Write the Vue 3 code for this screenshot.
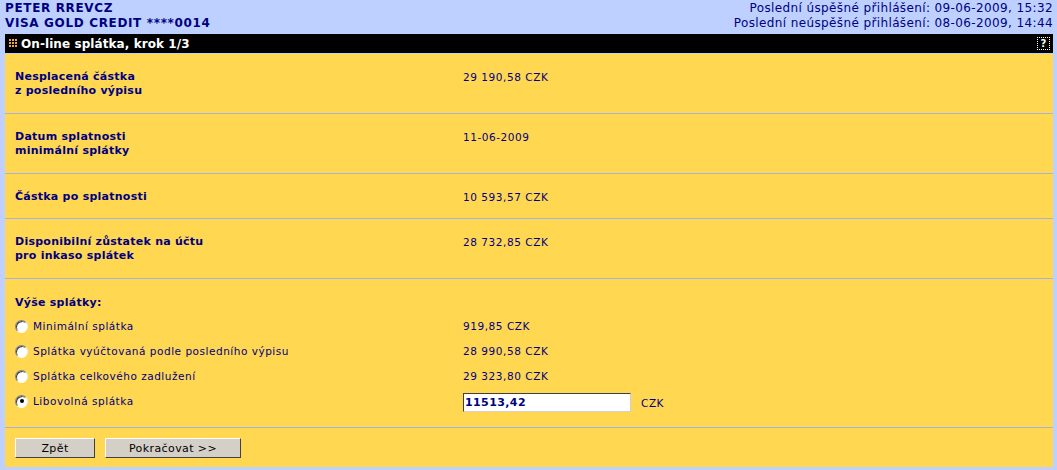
<script setup>
const infoRows = [
  { label: ["Nesplacená částka", "z posledního výpisu"], value: "29 190,58 CZK" },
  { label: ["Datum splatnosti", "minimální splátky"], value: "11-06-2009" },
  { label: ["Částka po splatnosti"], value: "10 593,57 CZK" },
  { label: ["Disponibilní zůstatek na účtu", "pro inkaso splátek"], value: "28 732,85 CZK" }
]

const options = [
  { label: "Minimální splátka", value: "919,85 CZK" },
  { label: "Splátka vyúčtovaná podle posledního výpisu", value: "28 990,58 CZK" },
  { label: "Splátka celkového zadlužení", value: "29 323,80 CZK" }
]
</script>

<template>
  <div class="page">
    <div class="top">
      <div class="client">
        <div>PETER RREVCZ</div>
        <div>VISA GOLD CREDIT ****0014</div>
      </div>
      <div class="logins">
        <div>Poslední úspěšné přihlášení: 09-06-2009, 15:32</div>
        <div>Poslední neúspěšné přihlášení: 08-06-2009, 14:44</div>
      </div>
    </div>

    <div class="titlebar">
      <svg class="dots" width="9" height="9" viewBox="0 0 9 9">
        <g fill="#f0a830">
          <rect x="0" y="0" width="2" height="2" /><rect x="3" y="0" width="2" height="2" /><rect x="6" y="0" width="2" height="2" />
          <rect x="0" y="3" width="2" height="2" /><rect x="3" y="3" width="2" height="2" /><rect x="6" y="3" width="2" height="2" />
          <rect x="0" y="6" width="2" height="2" /><rect x="3" y="6" width="2" height="2" /><rect x="6" y="6" width="2" height="2" />
        </g>
      </svg>
      <span class="title">On-line splátka, krok 1/3</span>
      <span class="help">?</span>
    </div>

    <div class="panel">
      <div
        v-for="row in infoRows"
        :key="row.value"
        class="row"
        :class="{ single: row.label.length === 1 }"
      >
        <div class="label">
          <div v-for="line in row.label" :key="line">{{ line }}</div>
        </div>
        <div class="value">{{ row.value }}</div>
      </div>

      <div class="amounts">
        <div class="label amounts-head">Výše splátky:</div>
        <div v-for="opt in options" :key="opt.label" class="option">
          <div class="opt-label">
            <span class="radio"></span>
            {{ opt.label }}
          </div>
          <div class="value">{{ opt.value }}</div>
        </div>
        <div class="option">
          <div class="opt-label">
            <span class="radio checked"></span>
            Libovolná splátka
          </div>
          <div class="value entry">
            <input class="amount" type="text" value="11513,42" />
            <span>CZK</span>
          </div>
        </div>
      </div>

      <div class="actions">
        <button class="btn back">Zpět</button>
        <button class="btn next">Pokračovat &gt;&gt;</button>
      </div>
    </div>
  </div>
</template>

<style>
html, body {
  background: #bdd0ff;
}
</style>

<style scoped>
.page {
  width: 1057px;
  height: 470px;
  overflow: hidden;
  background: #bdd0ff;
  font-family: Verdana, "DejaVu Sans", sans-serif;
  font-size: 11px;
  color: #000080;
}

.top {
  display: flex;
  justify-content: space-between;
  padding: 1px 4px 0 5px;
  height: 34px;
  box-sizing: border-box;
  font-size: 12px;
  line-height: 15px;
  letter-spacing: 0.38px;
}

.client {
  font-weight: bold;
  font-size: 12px;
  letter-spacing: 0.65px;
}

.logins {
  text-align: right;
}

.titlebar {
  margin: 0 4px 0 5px;
  height: 19px;
  background: #000;
  color: #fff;
  display: flex;
  align-items: center;
  padding: 0 3px 0 4px;
  border-bottom: 1px solid #bdd0ff;
}

.dots {
  margin-right: 3px;
}

.title {
  flex: 1;
  font-size: 12px;
  font-weight: bold;
  letter-spacing: 0.08px;
}

.help {
  width: 11px;
  height: 11px;
  border: 1px dotted #fff;
  font-size: 10px;
  font-weight: bold;
  line-height: 11px;
  text-align: center;
}

.panel {
  margin: 0 4px 0 5px;
  height: 413px;
  background: #ffd750;
}

.row {
  display: flex;
  padding: 16px 0 15px 10px;
  border-bottom: 1px solid #a3b2e0;
  line-height: 14px;
}

.row.single {
  padding-bottom: 14px;
}

.label {
  width: 448px;
  font-weight: bold;
  letter-spacing: 0.25px;
}

.value {
  flex: 1;
  font-size: 10.5px;
  letter-spacing: 0.55px;
}

.amounts {
  padding: 17px 0 8px 10px;
  border-bottom: 1px solid #a3b2e0;
  line-height: 14px;
}

.amounts-head {
  margin-bottom: 9px;
}

.option {
  display: flex;
  height: 25px;
  align-items: flex-start;
}

.opt-label {
  width: 448px;
  font-size: 10.5px;
  letter-spacing: 0.52px;
  display: flex;
  align-items: center;
  gap: 5px;
}

.radio {
  width: 13px;
  height: 13px;
  border-radius: 50%;
  background: #fff;
  border: 1px solid;
  border-color: #808080 #f4f0e8 #fff #808080;
  box-shadow: inset 1px 1px 0 #404040;
  box-sizing: border-box;
  position: relative;
}

.radio.checked::after {
  content: "";
  position: absolute;
  left: 3.5px;
  top: 3.5px;
  width: 4px;
  height: 4px;
  border-radius: 50%;
  background: #000;
}

.entry {
  display: flex;
  align-items: center;
  gap: 10px;
  margin-top: -1px;
}

.amount {
  width: 168px;
  height: 19px;
  box-sizing: border-box;
  border: 1px solid #d4d0c8;
  border-top-color: #404040;
  border-left-color: #404040;
  padding: 0 1px;
  font-family: inherit;
  font-size: 11px;
  font-weight: bold;
  color: #000080;
  background: #fff;
  letter-spacing: 0.4px;
}

.actions {
  display: flex;
  gap: 10px;
  padding: 10px 0 0 10px;
}

.btn {
  height: 20px;
  padding: 0;
  box-sizing: border-box;
  background: #d4d0c8;
  border: 1px solid #404040;
  border-top-color: #fff;
  border-left-color: #fff;
  font-family: inherit;
  font-size: 11px;
  color: #000;
  letter-spacing: 0.4px;
}

.back {
  width: 80px;
}

.next {
  width: 136px;
}
</style>
